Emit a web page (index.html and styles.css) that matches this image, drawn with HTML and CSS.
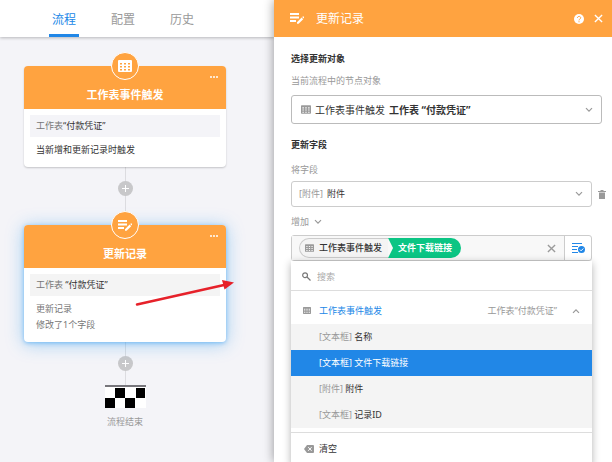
FILE: index.html
```html
<!DOCTYPE html>
<html lang="zh-CN">
<head>
    <meta charset="UTF-8">
    <meta name="viewport" content="width=device-width, initial-scale=1.0">
    <title>流程</title>
    <link rel="stylesheet" href="styles.css">
</head>
<body>
    <!-- 图标 -->
    <svg class="symbols" aria-hidden="true">
        <symbol id="i-table" viewBox="0 0 14 12">
            <path fill="currentColor" fill-rule="evenodd" d="M1 0h12a1 1 0 0 1 1 1v10a1 1 0 0 1-1 1H1a1 1 0 0 1-1-1V1a1 1 0 0 1 1-1zM2 3v1.500h2V3zM6 3v1.500h2V3zM10 3v1.500h2V3zM2 6v1.500h2V6zM6 6v1.500h2V6zM10 6v1.500h2V6zM2 9v1.500h2V9zM6 9v1.500h2V9zM10 9v1.500h2V9z"/>
        </symbol>
        <symbol id="i-edit" viewBox="0 0 14 11">
            <path fill="currentColor" d="M0 0h9v2H0zM0 3.500h9v2H0zM0 7h6v2H0zM7 9.200l4.600-4.600 1.600 1.600L8.600 10.800H7zM12.200 4l.6-.6a.6.6 0 0 1 .8 0l.4.5v.8l-.5.8z"/>
        </symbol>
        <symbol id="i-down" viewBox="0 0 8 6">
            <path fill="none" stroke="currentColor" stroke-width="1.200" d="M1 1.200l3 3 3-3"/>
        </symbol>
        <symbol id="i-close" viewBox="0 0 10 10">
            <path fill="none" stroke="currentColor" stroke-width="1.500" d="M1 1l8 8M9 1l-8 8"/>
        </symbol>
    </svg>

    <main class="flow">
        <nav class="tabs">
            <a class="tab active" href="#">流程</a>
            <a class="tab" href="#">配置</a>
            <a class="tab" href="#">历史</a>
        </nav>

        <div class="canvas">
            <section class="card">
                <header class="card_head">
                    <span class="card_icon"><svg width="14" height="12"><use href="#i-table"/></svg></span>
                    <button class="more" type="button" aria-label="更多"><i></i><i></i><i></i></button>
                    <h2>工作表事件触发</h2>
                </header>
                <div class="card_body">
                    <p class="source"><span>工作表</span>“付款凭证”</p>
                    <p class="desc">当新增和更新记录时触发</p>
                </div>
            </section>

            <div class="link">
                <button class="plus" type="button" aria-label="添加节点"></button>
            </div>

            <section class="card selected">
                <header class="card_head">
                    <span class="card_icon"><svg width="14" height="11"><use href="#i-edit"/></svg></span>
                    <button class="more" type="button" aria-label="更多"><i></i><i></i><i></i></button>
                    <h2>更新记录</h2>
                </header>
                <div class="card_body">
                    <p class="source gray"><span>工作表</span> “付款凭证”</p>
                    <p class="desc light">更新记录</p>
                    <p class="desc light">修改了1个字段</p>
                </div>
                <svg class="arrow" width="100" height="30" viewBox="0 0 100 30" aria-hidden="true">
                    <path fill="none" stroke="#e6212a" stroke-width="2.500" stroke-linecap="round" d="M3 25.500L90 6"/>
                    <path fill="#e6212a" d="M100 3.500L88 1 90.500 10.500z"/>
                </svg>
            </section>

            <div class="link short">
                <button class="plus" type="button" aria-label="添加节点"></button>
            </div>

            <div class="end">
                <svg width="41" height="23" viewBox="0 0 41 23" aria-hidden="true">
                    <path fill="#fff" d="M0 2h41v21H0z"/>
                    <path fill="#77767c" d="M0 0h41v2H0z"/>
                    <path d="M10 3h10v10H10zM31 3h9v10h-9zM0 13h10v10H0zM20 13h10v10H20z"/>
                </svg>
                <p>流程结束</p>
            </div>
        </div>
    </main>

    <aside class="panel">
        <header class="panel_head">
            <svg width="14" height="11"><use href="#i-edit"/></svg>
            <h1>更新记录</h1>
            <button class="icon_btn" type="button" aria-label="帮助">
                <svg width="10" height="10" viewBox="0 0 10 10">
                    <circle cx="5" cy="5" r="5" fill="#fff"/>
                    <path fill="none" stroke="#ffa340" d="M3.400 4c0-2.200 3.300-2.100 3.300-.1C6.700 5 5 5 5 6.400M5 7.200v1.100"/>
                </svg>
            </button>
            <button class="icon_btn" type="button" aria-label="关闭">
                <svg width="9" height="9"><use href="#i-close"/></svg>
            </button>
        </header>

        <form class="form">
            <h3>选择更新对象</h3>
            <label class="tip" for="target">当前流程中的节点对象</label>
            <div class="select_box big">
                <svg class="muted" width="10" height="9"><use href="#i-table"/></svg>
                <span>工作表事件触发</span>
                <select id="target">
                    <option>工作表 “付款凭证”</option>
                </select>
                <svg class="muted" width="8" height="6"><use href="#i-down"/></svg>
            </div>

            <h3 class="second">更新字段</h3>
            <label class="tip" for="field">将字段</label>
            <div class="field_row">
                <div class="select_box">
                    <span class="type">[附件]</span>
                    <select id="field">
                        <option>附件</option>
                    </select>
                    <svg class="muted" width="8" height="6"><use href="#i-down"/></svg>
                </div>
                <button class="icon_btn muted" type="button" aria-label="删除">
                    <svg width="8" height="9" viewBox="0 0 8 9"><path fill="currentColor" d="M0 1h2.500V0h3v1H8v1H0zM1 2.500h6V9H1z"/></svg>
                </button>
            </div>

            <button class="mode" type="button">增加 <svg width="8" height="6"><use href="#i-down"/></svg></button>

            <div class="value_box">
                <div class="value">
                    <span class="tag">
                        <span class="tag_node"><svg class="muted" width="9" height="8"><use href="#i-table"/></svg>工作表事件触发</span>
                        <span class="tag_field">文件下载链接</span>
                    </span>
                    <button class="icon_btn muted" type="button" aria-label="清除">
                        <svg width="9" height="9"><use href="#i-close"/></svg>
                    </button>
                </div>
                <button class="pick" type="button" aria-label="选择字段">
                    <svg width="13" height="10" viewBox="0 0 13 10">
                        <path fill="none" stroke="#2187e7" d="M0 .5h10M0 3.500h6M0 6.500h5M0 9.500h6"/>
                        <circle cx="9.500" cy="6.500" r="3.500" fill="#2187e7"/>
                        <path fill="none" stroke="#fff" d="M7.800 6.500l1.300 1.300 2.200-2.300"/>
                    </svg>
                </button>

                <div class="menu">
                    <div class="search">
                        <svg width="9" height="9" viewBox="0 0 9 9"><path fill="none" stroke="#777" stroke-width="1.200" d="M5.500 3.200a2.400 2.400 0 1 1-4.800 0 2.400 2.400 0 0 1 4.800 0zM5 5l3.500 3.500"/></svg>
                        <input type="text" placeholder="搜索" aria-label="搜索">
                    </div>
                    <button class="group" type="button">
                        <svg class="muted" width="8" height="7"><use href="#i-table"/></svg>
                        <span class="group_name">工作表事件触发</span>
                        <span class="group_from">工作表“付款凭证”</span>
                        <svg class="muted up" width="8" height="6"><use href="#i-down"/></svg>
                    </button>
                    <ul class="options">
                        <li><button type="button"><span>[文本框]</span> 名称</button></li>
                        <li><button class="on" type="button"><span>[文本框]</span> 文件下载链接</button></li>
                        <li><button type="button"><span>[附件]</span> 附件</button></li>
                        <li><button type="button"><span>[文本框]</span> 记录ID</button></li>
                    </ul>
                    <button class="clear" type="button">
                        <svg width="10" height="8" viewBox="0 0 10 8"><path fill="#999" d="M3 0h6a1 1 0 0 1 1 1v6a1 1 0 0 1-1 1H3L0 4z"/><path fill="none" stroke="#fff" d="M4.200 2.200l3.400 3.600M7.600 2.200L4.200 5.800"/></svg>
                        清空
                    </button>
                </div>
            </div>
        </form>
    </aside>
</body>
</html>
```

FILE: styles.css
```css
*{margin: 0;padding: 0;box-sizing: border-box;}
body{display: flex;min-height: 100vh;overflow: hidden;
font: 9px/14px "Noto Sans", "Noto Sans CJK SC", sans-serif;color: #333;background: #fff;}
button,input,select{font: inherit;color: inherit;background: none;border: 0;outline: 0;}
button{cursor: pointer;}
ul{list-style: none;}
a{text-decoration: none;}
svg{display: block;flex: none;}
.symbols{position: absolute;width: 0;height: 0;}
.muted{color: #9a9a9a;}
.icon_btn{display: flex;align-items: center;}

/* 左边流程 */
.flow{flex: 0 0 274px;background: #f4f4f8;}
.tabs{display: flex;gap: 29px;height: 37px;padding-left: 49px;background: #fff;
box-shadow: 0 1px 3px rgba(0,0,0,.25);}
.tab{width: 30px;font-size: 12px;line-height: 40px;text-align: center;color: #999;}
.tab.active{color: #2187e7;border-bottom: 3px solid #2187e7;}

.canvas{padding: 29px 48px 0 24px;}
.card{position: relative;background: #fff;border-radius: 4px;
box-shadow: 0 1px 2px rgba(0,0,0,.2);}
.card.selected{box-shadow: 0 1px 4px rgba(33,150,243,.5), 0 2px 18px rgba(33,150,243,.4);}
.card_head{position: relative;height: 43px;padding-top: 21px;color: #fff;
background: #ffa340;border-radius: 4px 4px 0 0;text-align: center;}
.card_head h2{font-size: 11px;line-height: 16px;}
.card_icon{position: absolute;top: -14px;left: 50%;margin-left: -14px;
display: flex;align-items: center;justify-content: center;width: 28px;height: 28px;
background: #ffa340;border: 1px solid #fff;border-radius: 50%;}
.more{position: absolute;top: 10px;right: 8px;display: flex;gap: 1px;}
.more i{width: 2px;height: 2px;background: #fff;border-radius: 50%;}
.card_body{padding: 6px 6px 9px;}
.source{padding: 4px 6px;margin-bottom: 5px;background: #f4f4f8;}
.source.gray{background: #f4f4f4;}
.source span{color: #777;}
.desc{padding: 1px 6px;}
.desc.light{color: #777;}
.arrow{position: absolute;right: -8px;top: 54px;}

.link{display: flex;justify-content: center;height: 58px;padding-top: 14px;
background: linear-gradient(#dcdce0,#dcdce0) center/1px 100% no-repeat;}
.link.short{height: 43px;}
.plus{width: 15px;height: 15px;border-radius: 50%;
background: linear-gradient(#fff,#fff) center/7px 1px no-repeat,
linear-gradient(#fff,#fff) center/1px 7px no-repeat, #c8c8ca;}
.end{display: flex;flex-direction: column;align-items: center;gap: 7px;color: #999;}

/* 右边面板 */
.panel{position: relative;flex: 1;background: #fff;box-shadow: 0 0 10px rgba(0,0,0,.4);}
.panel_head{display: flex;align-items: center;gap: 10px;height: 37px;padding: 0 9px 0 16px;
color: #fff;background: #ffa340;}
.panel_head h1{flex: 1;font-size: 12px;line-height: 18px;font-weight: normal;padding-left: 2px;}
.form{padding: 15px 10px 0 17px;}
.form h3{font-size: 9px;line-height: 14px;}
.form .second{margin-top: 14px;}
.tip{display: block;margin-top: 8px;color: #999;}
.second + .tip{margin-top: 11px;}
.select_box{display: flex;align-items: center;flex: 1;gap: 4px;height: 26px;padding: 0 8px 0 7px;
border: 1px solid #ccc;border-radius: 3px;}
.select_box.big{height: 29px;margin-top: 7px;padding-left: 9px;border-color: #bbb;font-size: 10px;}
.select_box select{flex: 1;min-width: 0;appearance: none;}
.big select{font-weight: bold;}
.type{color: #999;}
.field_row{display: flex;gap: 6px;margin: 4px -4px 0 0;}
.mode{display: flex;align-items: center;gap: 5px;margin: 8px 0 6px;color: #999;}

.value_box{position: relative;display: flex;height: 26px;margin-right: 10px;
border: 1px solid #ccc;border-radius: 3px;}
.value{display: flex;align-items: center;justify-content: space-between;flex: 1;
padding: 0 8px 0 7px;background: #f8f8f8;}
.tag{display: flex;height: 20px;line-height: 20px;}
.tag_node{display: flex;align-items: center;gap: 5px;padding: 0 6px 0 5px;font-weight: 500;
background: #f4f4f4;border: 1px solid #ccc;border-right: 0;border-radius: 10px 0 0 10px;}
.tag_field{padding: 0 9px 0 10px;color: #fff;font-weight: bold;background: #0bc584;
border-radius: 0 10px 10px 0;clip-path: polygon(0 0,100% 0,100% 100%,0 100%,5px 50%);}
.pick{display: flex;align-items: center;justify-content: center;width: 27px;
border-left: 1px solid #ccc;}

/* 下拉菜单 */
.menu{position: absolute;top: 25px;left: -1px;right: -1px;background: #fff;
box-shadow: 0 2px 8px rgba(0,0,0,.3);}
.search{display: flex;align-items: center;gap: 6px;height: 30px;padding: 2px 11px 0;
border-bottom: 1px solid #ddd;}
.search input{flex: 1;min-width: 0;}
.search input::placeholder{color: #aaa;}
.group{display: flex;align-items: center;width: 100%;height: 33px;padding: 6px 12px 0;}
.group_name{flex: 1;padding-left: 8px;text-align: left;color: #2187e7;}
.group_from{padding-right: 15px;color: #999;}
.up{transform: rotate(180deg);}
.options{padding-bottom: 4px;border-bottom: 1px solid #ddd;}
.options button{display: block;width: 100%;height: 26px;padding: 0 28px;text-align: left;
background: #f4f4f4;}
.options span{color: #999;}
.options .on,.options .on span{color: #fff;}
.options .on{background: #2187e7;}
.clear{display: flex;align-items: center;gap: 5px;width: 100%;height: 32px;padding: 0 13px;}
```
